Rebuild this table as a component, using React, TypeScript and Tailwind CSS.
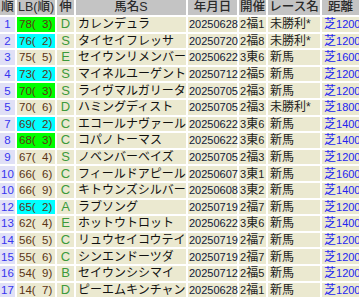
import React from "react";

type Row = [string, string, string, string, string, string, string, string, string];
// num, lb, hl, nobi, name, date, kaisai, race, dist
const rows: Row[] = [
  ["1", "78(\u20073)", "g", "D", "カレンデュラ", "20250628", "2福1", "未勝利*", "芝1200"],
  ["2", "76(\u20072)", "c", "S", "タイセイフレッサ", "20250720", "2福8", "未勝利*", "芝1200"],
  ["3", "75(\u20075)", "", "E", "セイウンリメンバー", "20250622", "3東6", "新馬", "芝1600"],
  ["4", "73(\u20072)", "c", "S", "マイネルユーゲント", "20250712", "2福5", "新馬", "芝1200"],
  ["5", "70(\u20073)", "g", "S", "ライヴマルガリータ", "20250705", "2福3", "新馬", "芝1200"],
  ["5", "70(\u20076)", "", "D", "ハミングディスト", "20250705", "2福3", "未勝利*", "芝1800"],
  ["7", "69(\u20072)", "c", "C", "エコールナヴァール", "20250622", "3東6", "新馬", "芝1400"],
  ["8", "68(\u20073)", "g", "C", "コパノトーマス", "20250622", "3東6", "新馬", "芝1400"],
  ["9", "67(\u20074)", "", "S", "ノベンバーベイズ", "20250705", "2福3", "新馬", "芝1200"],
  ["10", "66(\u20076)", "", "C", "フィールドアピール", "20250607", "3東1", "新馬", "芝1600"],
  ["10", "66(\u20079)", "", "C", "キトウンズシルバー", "20250608", "3東2", "新馬", "芝1400"],
  ["12", "65(\u20072)", "c", "A", "ラブソング", "20250719", "2福7", "新馬", "芝1200"],
  ["13", "62(\u20074)", "", "E", "ホットウトロット", "20250622", "3東6", "新馬", "芝1400"],
  ["14", "56(\u20075)", "", "C", "リュウセイコウテイ", "20250719", "2福7", "新馬", "芝1200"],
  ["15", "55(\u20076)", "", "C", "シンエンドーツダ", "20250719", "2福7", "新馬", "芝1200"],
  ["16", "54(\u20079)", "", "B", "セイウンシシマイ", "20250712", "2福5", "新馬", "芝1200"],
  ["17", "14(\u20077)", "", "D", "ピーエムキンチャン", "20250628", "2福1", "新馬", "芝1200"],
];

const headers = ["順", "LB(順)", "伸", "馬名S", "年月日", "開催", "レース名", "距離"];

export default function App() {
  return (
    <div className="w-[359px] h-[297px] overflow-hidden bg-white text-[12px] font-['Liberation_Sans','Noto_Sans_CJK_JP',sans-serif]">
      <div className="grid grid-cols-[15px_38px_17px_110px_49px_27px_52px_minmax(0,1fr)] grid-rows-[15px] auto-rows-[14.6px] gap-[2px]">
        {headers.map((h, i) => (
          <div
            key={i}
            className="bg-[#c4c4c4] text-[#2a2a2a] font-medium flex items-center justify-center leading-[15px] text-[12.5px] whitespace-nowrap"
          >
            {h}
          </div>
        ))}
        {rows.map((r, idx) => (
          <React.Fragment key={idx}>
            <div className="bg-[#e0e0f6] text-[#3636f0] flex items-center justify-center leading-[14px] text-[11.5px]">
              {r[0]}
            </div>
            <div
              className={
                "flex items-center pl-[2px] leading-[14px] whitespace-pre text-[#5a3414] text-[11.5px] " +
                (r[2] === "g" ? "bg-[#00ff00]" : r[2] === "c" ? "bg-[#00ffff]" : "bg-[#ebe9d0]")
              }
            >
              {r[1]}
            </div>
            <div className="bg-[#ebe9d0] text-[#3c9a3c] flex items-center justify-center leading-[14px] text-[13px]">
              {r[3]}
            </div>
            <div className="bg-[#ebe9d0] text-[#111] flex items-center pl-[2px] leading-[14px] whitespace-nowrap overflow-hidden">
              {r[4]}
            </div>
            <div className="bg-[#ebe9d0] text-[#101838] flex items-center pl-[1px] leading-[14px] text-[11px] whitespace-nowrap">
              {r[5]}
            </div>
            <div className="bg-[#ebe9d0] text-[#222] flex items-center pl-[1px] leading-[14px] whitespace-nowrap">
              <span className="text-[11px]">{r[6][0]}</span>
              <span>{r[6][1]}</span>
              <span className="text-[11px]">{r[6][2]}</span>
            </div>
            <div className="bg-[#ebe9d0] text-[#222] flex items-center pl-[2px] leading-[14px] whitespace-nowrap">
              {r[7]}
            </div>
            <div className="bg-[#ebe9d0] text-[#2323f0] flex items-center pl-[2px] leading-[14px] whitespace-nowrap">
              <span>{r[8][0]}</span>
              <span className="text-[11px]">{r[8].slice(1)}</span>
            </div>
          </React.Fragment>
        ))}
      </div>
    </div>
  );
}
